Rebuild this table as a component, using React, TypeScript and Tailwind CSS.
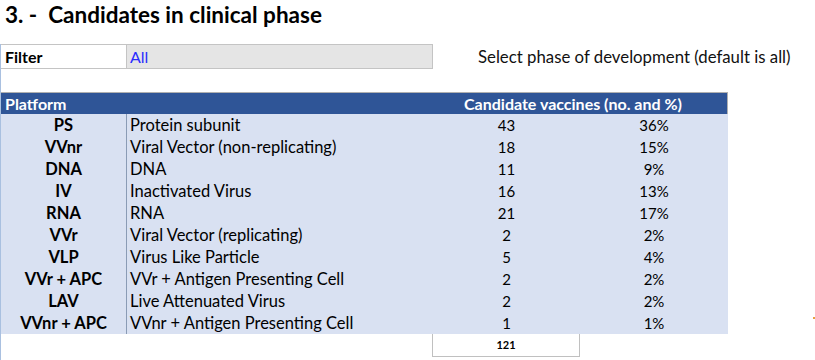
const ROWS = [
  { code: "PS", name: "Protein subunit", count: 43, pct: "36%" },
  { code: "VVnr", name: "Viral Vector (non-replicating)", count: 18, pct: "15%" },
  { code: "DNA", name: "DNA", count: 11, pct: "9%" },
  { code: "IV", name: "Inactivated Virus", count: 16, pct: "13%" },
  { code: "RNA", name: "RNA", count: 21, pct: "17%" },
  { code: "VVr", name: "Viral Vector (replicating)", count: 2, pct: "2%" },
  { code: "VLP", name: "Virus Like Particle", count: 5, pct: "4%" },
  { code: "VVr + APC", name: "VVr + Antigen Presenting Cell", count: 2, pct: "2%" },
  { code: "LAV", name: "Live Attenuated Virus", count: 2, pct: "2%" },
  { code: "VVnr + APC", name: "VVnr + Antigen Presenting Cell", count: 1, pct: "1%" },
];

export default function App() {
  return (
    <div
      className="relative w-[815px] h-[360px] bg-white text-black overflow-hidden"
      style={{ fontFamily: "Lato, 'Open Sans', sans-serif" }}
    >
      {/* Title */}
      <div className="h-[44px] pl-[5px] pt-[1px]">
        <h1 className="text-[22.5px] font-bold leading-[28px]">
          3. -&nbsp; Candidates in clinical phase
        </h1>
      </div>

      <div className="border-l border-[#a9c0e0] h-[316px]">
        {/* Filter row */}
        <div className="flex items-center h-[25px]">
          <div className="w-[125px] h-full border-y border-[#c4c4c4] flex items-center pl-[4px] text-[16px] font-bold">
            Filter
          </div>
          <div className="w-[307px] h-full border border-[#c4c4c4] bg-[#e5e5e5] flex items-center pl-[3px] text-[16px] text-[#2b2bff]">
            All
          </div>
          <div className="pl-[45px] text-[16.8px] text-[#111]">
            Select phase of development (default is all)
          </div>
        </div>

        <div className="h-[23px]" />

        {/* Table */}
        <div className="w-[727px]">
          <div className="flex items-center h-[22px] bg-[#2f5597] border-t border-r border-[#b0b0b0] text-white text-[16px] font-bold">
            <div className="w-[432px] pl-[4px]">Platform</div>
            <div className="flex-1 text-center pr-[14px]">Candidate vaccines (no. and %)</div>
          </div>
          <div className="bg-[#d9e1f2]">
            {ROWS.map((r) => (
              <div key={r.code} className="flex h-[22px] items-center text-[16.5px]">
                <div className="w-[125px] text-center font-bold">{r.code}</div>
                <div className="w-[307px] h-full border-l border-[#8a9bb5] pl-[3px] flex items-center">
                  {r.name}
                </div>
                <div className="w-[147px] text-center text-[15px]">{r.count}</div>
                <div className="flex-1 text-center text-[15px]">{r.pct}</div>
              </div>
            ))}
          </div>
          <div className="flex">
            <div className="ml-[431px] w-[148px] h-[23px] border-x border-b border-[#c0c0c0] flex items-center justify-center text-[11px] font-bold">
              121
            </div>
          </div>
        </div>
      </div>

      <span className="absolute left-[813px] top-[317px] w-[2px] h-[2px] bg-[#e8a040]" />
    </div>
  );
}
